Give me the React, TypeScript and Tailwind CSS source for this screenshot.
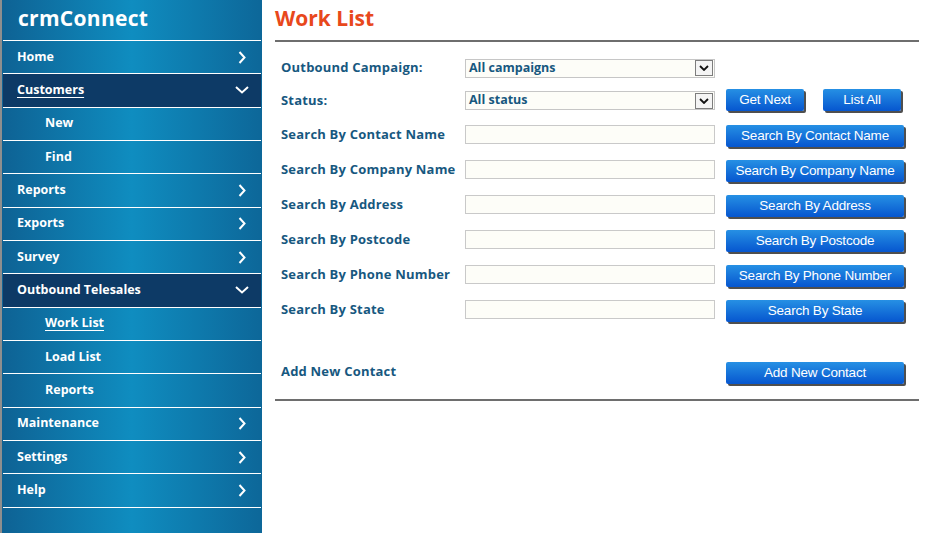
import React from "react";

const Right = () => (
  <svg width="8" height="13" viewBox="0 0 8 13" className="shrink-0">
    <path d="M1.5 1 L6.5 6.5 L1.5 12" stroke="white" strokeWidth="2" fill="none" />
  </svg>
);
const Down = () => (
  <svg width="14" height="8" viewBox="0 0 14 8" className="shrink-0">
    <path d="M1 1 L7 6.5 L13 1" stroke="white" strokeWidth="2" fill="none" />
  </svg>
);

type Item = { label: string; kind: "top" | "open" | "sub"; underline?: boolean };

const items: Item[] = [
  { label: "Home", kind: "top" },
  { label: "Customers", kind: "open", underline: true },
  { label: "New", kind: "sub" },
  { label: "Find", kind: "sub" },
  { label: "Reports", kind: "top" },
  { label: "Exports", kind: "top" },
  { label: "Survey", kind: "top" },
  { label: "Outbound Telesales", kind: "open" },
  { label: "Work List", kind: "sub", underline: true },
  { label: "Load List", kind: "sub" },
  { label: "Reports", kind: "sub" },
  { label: "Maintenance", kind: "top" },
  { label: "Settings", kind: "top" },
  { label: "Help", kind: "top" },
];

const Btn = ({ children, w }: { children: React.ReactNode; w: string }) => (
  <button
    className={`${w} h-[22px] -mt-[1px] rounded-[2px] bg-[linear-gradient(to_bottom,#2690e4,#0656cf)] text-white text-[13.5px] leading-none shadow-[2px_2px_0_#4f4f4f] font-['Liberation_Sans',Arial,sans-serif] tracking-[-0.2px]`}
  >
    {children}
  </button>
);

const Label = ({ children }: { children: React.ReactNode }) => (
  <div className="w-[184px] shrink-0 text-[13px] font-bold text-[#17587f] tracking-[0.2px]">{children}</div>
);

const Select = ({ text }: { text: string }) => (
  <div className="w-[250px] h-[19px] border border-[#c6c6c6] bg-[#fdfdf8] flex items-center justify-between pl-[3px] pr-[1px]">
    <span className="text-[12.5px] font-bold text-[#17587f] leading-none">{text}</span>
    <span className="w-[18px] h-[16px] border border-[#7d7d7d] bg-[#f4f4f4] flex items-center justify-center">
      <svg width="10" height="6" viewBox="0 0 10 6">
        <path d="M1 1 L5 5 L9 1" stroke="#111" strokeWidth="1.8" fill="none" />
      </svg>
    </span>
  </div>
);

const Input = () => <div className="w-[250px] h-[19px] border border-[#c9c9c9] bg-[#fdfdf8]" />;

const searches = ["Contact Name", "Company Name", "Address", "Postcode", "Phone Number", "State"];

export default function App() {
  return (
    <div className="flex w-[928px] h-[533px] bg-white font-['Open_Sans',sans-serif] overflow-hidden">
      <aside className="w-[262px] h-full shrink-0 border-l-2 border-[#8e8e8e] bg-[linear-gradient(to_right,#0e6294,#0f8dc0_50%,#0d6799)] flex flex-col px-[1px]">
        <div className="h-[41px] shrink-0 border-b border-white flex items-center pl-[15px]">
          <span className="text-white text-[21px] font-bold tracking-[0.3px] leading-none -mt-[4px]">crmConnect</span>
        </div>
        {items.map((it, i) => (
          <div
            key={i}
            className={`h-[33.33px] shrink-0 border-b border-white flex items-center justify-between ${
              it.kind === "open" ? "bg-[#0d3a66] pr-[12px]" : "pr-[15px]"
            } ${it.kind === "sub" ? "pl-[42px]" : "pl-[14px]"}`}
          >
            <span className={`text-white text-[12.5px] font-bold ${it.underline ? "underline underline-offset-[3px]" : ""}`}>
              {it.label}
            </span>
            {it.kind === "top" && <Right />}
            {it.kind === "open" && <Down />}
          </div>
        ))}
      </aside>
      <main className="flex-1 pl-[13px] pr-[9px]">
        <div className="h-[42px] border-b-2 border-[#6e6e6e] flex items-center">
          <h1 className="text-[#e8481c] text-[21px] font-bold leading-none -mt-[3px]">Work List</h1>
        </div>
        <div className="pt-[10px] pl-[6px]">
          <div className="h-[32px] flex items-center">
            <Label>Outbound Campaign:</Label>
            <Select text="All campaigns" />
          </div>
          <div className="h-[33px] flex items-center">
            <Label>Status:</Label>
            <Select text="All status" />
            <div className="ml-[11px] flex gap-[19px]">
              <Btn w="w-[78px]">Get Next</Btn>
              <Btn w="w-[78px]">List All</Btn>
            </div>
          </div>
          {searches.map((s) => (
            <div key={s} className="h-[35px] flex items-center">
              <Label>Search By {s}</Label>
              <Input />
              <div className="ml-[11px]">
                <Btn w="w-[178px]">Search By {s}</Btn>
              </div>
            </div>
          ))}
          <div className="h-[35px] flex items-center mt-[27px]">
            <Label>Add New Contact</Label>
            <div className="w-[250px]" />
            <div className="ml-[11px]">
              <Btn w="w-[178px]">Add New Contact</Btn>
            </div>
          </div>
        </div>
        <div className="mt-[10px] border-b-2 border-[#6e6e6e]" />
      </main>
    </div>
  );
}
